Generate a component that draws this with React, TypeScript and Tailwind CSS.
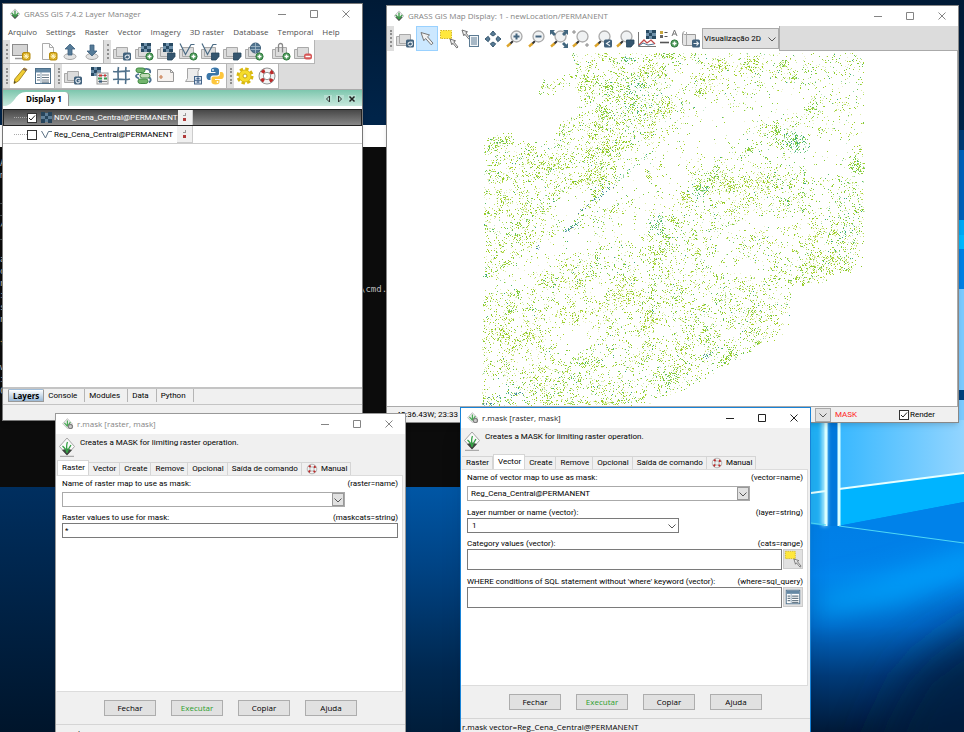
import { useMemo, type ReactNode } from "react";
import clsx from "clsx";

const UI = "font-[Roboto,'Noto_Sans',sans-serif]";
const TITLE = "font-['Open_Sans','Noto_Sans',sans-serif]";
const BOLD = "font-['Open_Sans','Noto_Sans',sans-serif] font-bold";

/* ---------- icons ---------- */

function Svg({ children, size = 20 }: { children: ReactNode; size?: number }) {
  return (
    <svg width={size} height={size} viewBox="0 0 20 20" fill="none" className="shrink-0" aria-hidden="true">
      {children}
    </svg>
  );
}

const Sheets = () => (
  <g fill="#dcdcdc" stroke="#a9a9a9">
    <path d="M1.500 7.500h11v9h-11z" />
    <path d="M4.500 5.500h11v9h-11z" />
  </g>
);

const Plus = () => (
  <g>
    <circle cx="15.500" cy="14.500" r="3.600" fill="#4f9a5c" stroke="#2f7a3d" />
    <path d="M15.500 12.500v4M13.500 14.500h4" stroke="#fff" strokeWidth="1.400" />
  </g>
);

const Badge = ({ d = "M13 15.500a2.200 2.200 0 0 1 4-1.500v-1.500M17.500 14.500a2.200 2.200 0 0 1-4 1.500" }: { d?: string }) => (
  <g>
    <rect x="11" y="10.500" width="8" height="8" rx="1.500" fill="#41617c" />
    <path d={d} stroke="#e8eef3" strokeWidth="1.100" />
  </g>
);

const Fold = () => <path d="M11.500 11h7.500v3.500l-3 3.500h-4.500z" fill="#35566f" stroke="#24445c" strokeWidth=".8" />;

const Checker = ({ x = 6, y = 1 }: { x?: number; y?: number }) => (
  <g transform={`translate(${x} ${y})`}>
    <rect width="10" height="9" fill="#6f91ab" />
    <path d="M0 0h3v3H0zM6 0h4v3H6zM3 3h3v3H3zM0 6h3v3H0zM6 6h4v3H6z" fill="#284a63" />
  </g>
);

const Vee = () => <path d="M2 1.500l5.500 11 5.500-10h3.500" stroke="#4b6b84" strokeWidth="1.200" />;

const Star = () => (
  <g>
    <rect x="11.500" y="10.500" width="7.500" height="7.500" rx="1.500" fill="#d9ac1c" stroke="#b48a0c" />
    <path d="M15.200 11.500v5.500M12.500 14.200H18M13.300 12.300l3.900 3.900M17.200 12.300l-3.900 3.900" stroke="#fff6c8" />
  </g>
);

const Lens = ({ children }: { children?: ReactNode }) => (
  <g>
    <path d="M8 12l-3.500 3.500" stroke="#333" strokeWidth="2" />
    <path d="M5.500 14.500l-3.500 3" stroke="#dda52c" strokeWidth="2.400" />
    <circle cx="11.500" cy="7.500" r="5.500" fill="#f0f2f3" stroke="#aaa" strokeWidth="1.300" />
    {children}
  </g>
);

const Arrow = () => <path d="M4 3.500l8.500 2.500-2 1.800 5.500 6.400-1.800 1.600-5.600-6.300-1.800 2.200z" fill="#f2f2f2" stroke="#777" />;

const SmallArrow = ({ x, y }: { x: number; y: number }) => (
  <path transform={`translate(${x} ${y})`} d="M0 0l5.500 1.800-1.700 1L8 8 6.800 9 2.800 4.200l-1 1.600z" fill="#eee" stroke="#666" strokeWidth=".9" />
);

const Table = () => (
  <g>
    <rect x="2.500" y="2.500" width="15" height="15" fill="#fff" stroke="#4d6f8a" />
    <path d="M3 3h14v3.500H3z" fill="#6488a4" />
    <path d="M4 9h3M4 11.500h3M4 14h3M9 9h7M9 11.500h7M9 14h7M9 16.200h7" stroke="#6a7b88" strokeWidth="1.200" />
    <path d="M8 6v11.500" stroke="#8fa7b8" />
  </g>
);

const Lifebuoy = () => (
  <g>
    <circle cx="10" cy="10" r="5.800" stroke="#f4f4f4" strokeWidth="4" />
    <circle cx="10" cy="10" r="5.800" stroke="#bd2a2a" strokeWidth="3.600" strokeDasharray="3.200 5.910" strokeDashoffset="-2.900" />
    <circle cx="10" cy="10" r="8" stroke="#777" strokeWidth=".8" />
    <circle cx="10" cy="10" r="3.700" stroke="#777" strokeWidth=".8" />
  </g>
);

const Select = () => (
  <g>
    <rect x="1.500" y="1.500" width="11" height="8" fill="#ffe83c" stroke="#d5b920" strokeDasharray="1.500 1" />
    <SmallArrow x={11} y={10} />
  </g>
);

const Logo = ({ size }: { size?: number }) => (
  <Svg size={size}>
    <path d="M10 1l7.500 8.500L10 18l-7.500-8.500z" fill="#fafafa" stroke="#a5a5a5" />
    <path d="M5 13l5-1.500 5 1.500-5 5.500z" fill="#3f443f" />
    <path d="M10 16c-.5-4-1-8 .5-11M10 16c-.5-3-2-5-4.500-7M10 16c.5-3 2-5 4-8" stroke="#35a045" strokeWidth="1.300" />
    <path d="M3 19.300h14" stroke="#999" />
  </Svg>
);

const TitleLogo = () => (
  <Svg size={12}>
    <path d="M10 1.500l8 8.500-8 8-8-8z" fill="#eee" stroke="#aaa" />
    <path d="M4 12l6-1 6 1-6 6.500z" fill="#4d554f" />
    <path d="M10 15V4M10 15L4.500 8M10 15l5.500-7" stroke="#3d9c4a" strokeWidth="2.200" />
  </Svg>
);

const DialogTitleLogo = () => (
  <Svg size={12}>
    <path d="M9 1l8 8.500-8 8-8-8z" fill="#eee" stroke="#aaa" />
    <path d="M9 14V4M9 14L4 8M9 14l5-7" stroke="#4cab58" strokeWidth="2" />
    <circle cx="14" cy="14" r="3.500" fill="#ccc" stroke="#808080" strokeWidth="2" />
  </Svg>
);

const icons = {
  newDisplay: (
    <Svg>
      <rect x="1.500" y="2.500" width="15" height="11" fill="#d5d5d5" stroke="#8c8c8c" />
      <path d="M4 16.500h9" stroke="#999" strokeWidth="1.500" />
      <Star />
    </Svg>
  ),
  newFile: (
    <Svg>
      <path d="M4.500 1.500h7l4 4v12h-11z" fill="#fcfcfc" stroke="#aaa" />
      <path d="M11.500 1.500v4h4" stroke="#aaa" />
      <Star />
    </Svg>
  ),
  open: (
    <Svg>
      <ellipse cx="10" cy="14.500" rx="6" ry="3" fill="#e2e2e2" stroke="#a5a5a5" />
      <path d="M10 2l5 5h-3v6H8V7H5z" fill="#557b98" stroke="#3d617d" strokeWidth=".8" />
    </Svg>
  ),
  save: (
    <Svg>
      <ellipse cx="10" cy="14.500" rx="6" ry="3" fill="#e2e2e2" stroke="#a5a5a5" />
      <path d="M10 14l5-5h-3V3H8v6H5z" fill="#557b98" stroke="#3d617d" strokeWidth=".8" />
    </Svg>
  ),
  render: <Svg><Sheets /><Badge /></Svg>,
  addRaster: <Svg><Sheets /><Checker x={7} y={1} /><Plus /></Svg>,
  rasterMisc: <Svg><Sheets /><Checker x={7} y={1} /><Fold /></Svg>,
  addVector: <Svg><Sheets /><Vee /><Plus /></Svg>,
  vectorMisc: <Svg><Sheets /><Vee /><Fold /></Svg>,
  overlay: <Svg><Sheets /><Fold /></Svg>,
  web: (
    <Svg>
      <Sheets />
      <circle cx="11.500" cy="6" r="5" fill="#51748f" stroke="#3b5d78" />
      <path d="M7 4.500h9M6.500 7.500h10M11.500 1v10" stroke="#a7bccb" strokeWidth=".8" />
      <Plus />
    </Svg>
  ),
  group: (
    <Svg>
      <Sheets />
      <path d="M7.500 10V3.500a2 2 0 0 1 4 0v7" stroke="#888" strokeWidth="1.300" />
      <Plus />
    </Svg>
  ),
  remove: (
    <Svg>
      <Sheets />
      <rect x="11" y="11.500" width="8" height="6" rx="2.500" fill="#d65757" />
      <path d="M12.500 14.500h5" stroke="#fff" strokeWidth="1.500" />
    </Svg>
  ),
  edit: (
    <Svg>
      <path d="M13 2l3 1.500L7.500 15l-4.500 2.500.8-4.500z" fill="#f0cd33" stroke="#a98b22" />
      <path d="M13 2l3 1.500-1.300 1.800-3-1.600z" fill="#8b6b5b" />
      <path d="M3 17.500l.5-2.500 1.500 1z" fill="#333" />
    </Svg>
  ),
  table: <Svg><Table /></Svg>,
  importLayer: <Svg><Sheets /><Badge d="M16.800 13a2.300 2.300 0 1 0 .3 2.800v-1h-2" /></Svg>,
  calculator: (
    <Svg>
      <Checker x={1} y={1} />
      <rect x="7" y="7" width="11" height="11" fill="#f1f1f1" stroke="#999" />
      <path d="M8 9.500h9M8 15.500h9" stroke="#888" />
      <path d="M9 9.500h3M14 9.500h2" stroke="#c33" strokeWidth="2.200" />
      <path d="M8 12.500h4M14 12.500h3" stroke="#3a9a50" strokeWidth="2.200" />
      <path d="M9 15.500h3" stroke="#35597a" strokeWidth="2.200" />
    </Svg>
  ),
  georect: (
    <Svg>
      <path d="M6.500 1c-1.500 6 .5 11-.5 17M14 1c-1 6 .5 11-.5 17M1 5.500c6 1 11-1 17-.5M1 13.500c6-1 11 1 17-.5" stroke="#50718b" strokeWidth="1.600" />
    </Svg>
  ),
  modeler: (
    <Svg>
      <path d="M9 3.500c5-1.500 8 0 7 3.500M5 8c-4 1-4 3 0 4.500M12 11c5 0 6 3 3 5.500" stroke="#4d7290" strokeWidth="1.800" />
      <rect x="2" y="2" width="9" height="4.500" rx="2.200" fill="#72b46c" stroke="#3f8a42" />
      <rect x="6" y="7.500" width="10" height="4.500" rx="2.200" fill="#c4dcb9" stroke="#3f8a42" />
      <rect x="4" y="13" width="10" height="4.500" rx="2.200" fill="#72b46c" stroke="#3f8a42" />
    </Svg>
  ),
  layout: (
    <Svg>
      <path d="M1.500 3.500h13l3 3v9h-16z" fill="#f5f1ee" stroke="#999" />
      <path d="M14.500 3.500v3h3" stroke="#999" />
      <path d="M5 9v4M3 11h4" stroke="#cb8054" strokeWidth="1.200" />
    </Svg>
  ),
  script: (
    <Svg>
      <path d="M4.500 2.500h12l-1.500 3v10H2.500l2-3z" fill="#ececec" stroke="#a5a5a5" />
      <rect x="11.500" y="10.500" width="7" height="7.500" fill="#d8e2ee" stroke="#44658a" />
      <path d="M15 11v6M12 14.300h6M13.500 12.500h3M13.500 16h3" stroke="#44658a" />
    </Svg>
  ),
  python: (
    <Svg>
      <path d="M10 1.500c-3 0-4 1-4 2.500v2h4.500v1H4C2.500 7 1.500 8.500 1.500 10.500S2.500 14 4 14h1.500v-2c0-1.500 1-2.500 2.500-2.500h4c1.200 0 2-.8 2-2V4c0-1.500-1.500-2.500-4-2.500z" fill="#3a76a8" />
      <path d="M10.500 18.500c3 0 4-1 4-2.500v-2H10v-1h6.500c1.500 0 2.300-1.500 2.300-3.500S18 6 16.500 6H15v2c0 1.500-1 2.500-2.500 2.500h-4c-1.200 0-2 .8-2 2V16c0 1.500 1.500 2.500 4 2.500z" fill="#fdc63c" />
      <circle cx="8" cy="4" r=".9" fill="#fff" />
      <circle cx="12.500" cy="16" r=".9" fill="#fff" />
    </Svg>
  ),
  settings: (
    <Svg>
      <circle cx="10" cy="10" r="7" stroke="#d9b90e" strokeWidth="3" strokeDasharray="3.300 2.200" />
      <circle cx="10" cy="10" r="6" fill="#f6dc2b" stroke="#dcbd17" />
      <circle cx="10" cy="10" r="2" fill="#fff" stroke="#c5a510" />
    </Svg>
  ),
  help: <Svg><Lifebuoy /></Svg>,
  pointer: <Svg><Arrow /></Svg>,
  select: <Svg><Select /></Svg>,
  query: (
    <Svg>
      <SmallArrow x={1} y={1} />
      <rect x="8.500" y="6.500" width="9" height="11" fill="#f3f6f8" stroke="#5c7b93" />
      <path d="M10 9h6M10 11h6M10 13h6M10 15h6" stroke="#5c7b93" strokeWidth="1.200" />
    </Svg>
  ),
  pan: (
    <Svg>
      <path d="M10 2l2.700 3.200L10 7 7.300 5.200zM10 18l2.700-3.200L10 13l-2.700 1.800zM2 10l3.200-2.700L7 10l-1.800 2.700zM18 10l-3.200-2.700L13 10l1.800 2.700z" fill="#587b96" stroke="#38586f" />
    </Svg>
  ),
  zoomIn: <Svg><Lens><path d="M11.500 4.500v6M8.500 7.500h6" stroke="#44657f" strokeWidth="2" /></Lens></Svg>,
  zoomOut: <Svg><Lens><path d="M8.500 7.500h6" stroke="#44657f" strokeWidth="2" /></Lens></Svg>,
  zoomExtent: (
    <Svg>
      <Lens />
      <path d="M1 1h5L4.500 2.500 7 5 5 7 2.500 4.500 1 6zM19 1v5l-1.500-1.500L15 7l-2-2 2.500-2.500L14 1zM19 19h-5l1.500-1.500L13 15l2-2 2.500 2.500L19 14z" fill="#43677f" />
    </Svg>
  ),
  zoomRegion: (
    <Svg>
      <Lens />
      <path d="M1 3h4M3 1v4M14 16h4M16 14v4" stroke="#888" />
    </Svg>
  ),
  zoomBack: <Svg><Lens /><Badge d="M17 12.200l-3.500 2.300 3.500 2.300" /></Svg>,
  zoomMore: <Svg><Lens /><Fold /></Svg>,
  analyze: (
    <Svg>
      <Checker x={9} y={1} />
      <path d="M1.500 3v14.500H19" stroke="#777" />
      <path d="M2 16l5-5 3 3 4-3 4 4" stroke="#c24949" strokeWidth="1.300" />
      <path d="M2 17l4-3 5 2 6-1" stroke="#4d7290" />
    </Svg>
  ),
  decorate: (
    <Svg>
      <path d="M1 2h3v3H1z" fill="#c9a83e" />
      <path d="M1 6h3v3H1z" fill="#666" />
      <path d="M5.500 3.500h3M5.500 7.500h3" stroke="#555" />
      <path d="M13 7l2.500-6L18 7M14 5h3" stroke="#777" />
      <path d="M1 13.500h9" stroke="#555" strokeWidth="1.600" />
      <Plus />
    </Svg>
  ),
  saveImage: (
    <Svg>
      <path d="M3.500 2.500c-2 0-2 3 0 3h11v11h-11c-1.500 0-2-1-2-2v-10" fill="#e5e5e5" stroke="#999" />
      <path d="M5.500 3v13" stroke="#aaa" />
      <Badge d="M12.500 14.500h5M15.500 12.500l2 2-2 2" />
    </Svg>
  ),
};

type IconName = keyof typeof icons;

/* ---------- shared widgets ---------- */

const Grip = () => (
  <div className="flex w-[7px] shrink-0 justify-center bg-[#dedede] py-1">
    <div className="w-0 border-l-2 border-dotted border-[#8f8f8f]" />
  </div>
);

function Tool({ name, active }: { name: IconName; active?: boolean }) {
  return (
    <button
      aria-label={name}
      className={clsx(
        "flex w-[22px] shrink-0 items-center justify-center",
        active && "border border-[#99d1ff] bg-[#cce8ff]"
      )}
    >
      {icons[name]}
    </button>
  );
}

function ToolGroup({ items }: { items: (IconName | "|")[] }) {
  return (
    <div className="flex border-r border-b border-[#b5b5b5] bg-white">
      <Grip />
      {items.map((it, i) =>
        it === "|" ? <span key={i} className="w-[5px] shrink-0" /> : <Tool key={i} name={it} />
      )}
    </div>
  );
}

function TitleBar({ icon, title, active }: { icon: ReactNode; title: string; active?: boolean }) {
  return (
    <header
      className={clsx("flex h-5 shrink-0 items-center bg-white pl-[6px]", active ? "text-[#222]" : "text-[#848484]")}
    >
      {icon}
      <h1 className={clsx("ml-[3px] text-[8px] leading-none whitespace-nowrap", TITLE)}>{title}</h1>
      <div className="ml-auto flex">
        <button aria-label="Minimize" className="flex h-5 w-8 items-center justify-center">
          <svg width="8" height="8" viewBox="0 0 8 8" stroke="currentColor"><path d="M0 4.500h8" /></svg>
        </button>
        <button aria-label="Maximize" className="flex h-5 w-8 items-center justify-center">
          <svg width="8" height="8" viewBox="0 0 8 8" stroke="currentColor" fill="none"><path d="M.5.5h7v7h-7z" /></svg>
        </button>
        <button aria-label="Close" className="flex h-5 w-8 items-center justify-center">
          <svg width="8" height="8" viewBox="0 0 8 8" stroke="currentColor"><path d="M.5.5l7 7M7.500.5l-7 7" /></svg>
        </button>
      </div>
    </header>
  );
}

const Chevron = () => (
  <svg width="8" height="8" viewBox="0 0 8 8" fill="none" stroke="#555" className="pointer-events-none" aria-hidden="true">
    <path d="M.5 2.500L4 6l3.500-3.500" />
  </svg>
);

function Check({ checked, label }: { checked?: boolean; label: ReactNode }) {
  return (
    <label className="flex items-center">
      <span className="grid size-[10px] shrink-0 place-items-center">
        <input
          type="checkbox"
          defaultChecked={checked}
          className="peer col-start-1 row-start-1 size-[10px] appearance-none border border-[#333] bg-white"
        />
        <svg width="8" height="8" viewBox="0 0 8 8" fill="none" stroke="#222" className="pointer-events-none invisible z-10 col-start-1 row-start-1 peer-checked:visible">
          <path d="M1 4l2 2 4-4.500" />
        </svg>
      </span>
      {label}
    </label>
  );
}

/* ---------- layer manager ---------- */

const MENUS = ["Arquivo", "Settings", "Raster", "Vector", "Imagery", "3D raster", "Database", "Temporal", "Help"];

function LayerRow({ name, selected, icon }: { name: string; selected?: boolean; icon: ReactNode }) {
  return (
    <li
      className={clsx(
        "flex h-[17px] items-center",
        selected ? "bg-gradient-to-b from-[#444] to-[#8d8d8d] text-white outline outline-1 -outline-offset-1 outline-[#222]" : "text-black"
      )}
    >
      <span className="ml-[11px] w-[13px] shrink-0 border-t border-dotted border-[#aaa]" />
      <Check
        checked={selected}
        label={
          <>
            <span className="ml-[4px] flex w-[13px] shrink-0">{icon}</span>
            <span className="text-[8px] leading-none whitespace-nowrap">{name}</span>
          </>
        }
      />
      <button
        aria-label={`Options ${name}`}
        className="ml-auto flex h-full w-4 flex-col items-center justify-center gap-[2px] border-r border-b border-[#ccc] bg-[#f0f0f0]"
      >
        <span className="h-[3px] w-[3px] border-r border-b border-[#999]" />
        <span className="size-[3px] bg-[#b03a3a]" />
      </button>
      <span className="w-[169px] shrink-0" />
    </li>
  );
}

function LayerManager() {
  return (
    <section className="absolute top-[3px] left-[2px] flex h-[418px] w-[361px] flex-col border border-[#777] bg-[#f0f0f0] shadow-md">
      <TitleBar icon={<TitleLogo />} title="GRASS GIS 7.4.2 Layer Manager" />
      <nav className={clsx("flex h-4 shrink-0 items-center gap-[9px] bg-white pl-[5px]", TITLE)}>
        {MENUS.map((m) => (
          <button key={m} className="text-[8px] leading-none whitespace-nowrap text-[#505050]">
            {m}
          </button>
        ))}
      </nav>
      <div className="flex h-6 shrink-0 bg-[#dcdcdc]">
        <ToolGroup items={["newDisplay", "|", "newFile", "open", "save"]} />
        <ToolGroup items={["render", "addRaster", "rasterMisc", "addVector", "vectorMisc", "overlay", "web", "|", "group", "remove"]} />
      </div>
      <div className="flex h-[25px] shrink-0 bg-[#dcdcdc]">
        <ToolGroup items={["edit", "table"]} />
        <ToolGroup items={["importLayer", "|", "calculator", "georect", "modeler", "layout", "|", "script", "python"]} />
        <ToolGroup items={["settings", "help"]} />
      </div>

      <div className="flex h-[17px] shrink-0 items-end border-t border-[#aaa] bg-gradient-to-b from-[#7cc6ad] to-[#c9e9de]">
        <svg width="23" height="14" viewBox="0 0 23 14" aria-hidden="true">
          <path d="M2 14C12 13 12 0 23 0v14z" fill="#fff" />
        </svg>
        <span className={clsx("flex h-[14px] items-center rounded-tr-sm border-r border-[#999] bg-white pr-1.5 text-[8px] text-black", BOLD)}>
          Display 1
        </span>
        <span className="ml-auto flex gap-1 pr-1.5 pb-[3px]">
          <button aria-label="Previous" className="bg-[#b5dfd1]">
            <svg width="8" height="8" viewBox="0 0 8 8" fill="none" stroke="#333"><path d="M5.500 1v6L2.500 4z" /></svg>
          </button>
          <button aria-label="Next" className="bg-[#b5dfd1]">
            <svg width="8" height="8" viewBox="0 0 8 8" fill="none" stroke="#333"><path d="M2.500 1v6l3-3z" /></svg>
          </button>
          <button aria-label="Close tab" className="bg-[#b5dfd1]">
            <svg width="8" height="8" viewBox="0 0 8 8" stroke="#222" strokeWidth="1.500"><path d="M1.500 1.500l5 5M6.500 1.500l-5 5" /></svg>
          </button>
        </span>
      </div>

      <ul className="flex-1 bg-white pt-[3px]">
        <LayerRow
          name="NDVI_Cena_Central@PERMANENT"
          selected
          icon={
            <svg width="11" height="11" viewBox="0 0 11 11">
              <path d="M0 0h4v4H0zM7 0h4v4H7zM4 4h3v3H4zM0 7h4v4H0zM7 7h4v4H7z" fill="#27455c" />
              <path d="M4 1h3v3H4zM0 4h4v3H0zM7 4h4v3H7zM4 7h3v3H4z" fill="#5f7f98" />
            </svg>
          }
        />
        <LayerRow
          name="Reg_Cena_Central@PERMANENT"
          icon={
            <svg width="11" height="9" viewBox="0 0 11 9" fill="none" stroke="#5b7184">
              <path d="M.5 1l4 7 3-6.500H11" />
            </svg>
          }
        />
        <li className="border-t border-[#ccc]" />
      </ul>

      <div className="flex h-[18px] shrink-0 items-stretch border-t-2 border-b border-[#c4c4c4] pb-[2px] pl-[5px] text-[8px] text-black">
        <button className={clsx("border border-[#999] border-t-transparent bg-gradient-to-b from-white to-[#9bb9d6] px-1 leading-none", BOLD)}>
          Layers
        </button>
        {["Console", "Modules", "Data", "Python"].map((t) => (
          <button key={t} className="border-r border-[#b5b5b5] pr-[7px] pl-1 leading-none">
            {t}
          </button>
        ))}
      </div>
      <div className="h-[15px] shrink-0" />
    </section>
  );
}

/* ---------- map display ---------- */

// outline of the region with data, in map canvas pixels
const REGION: [number, number][] = [
  [91, 2], [384, 2], [384, 216], [354, 227], [330, 237], [311, 234], [309, 267], [284, 290], [260, 310], [233, 323],
  [210, 337], [187, 345], [140, 354], [2, 355], [3, 256], [5, 226], [4, 106], [7, 87], [33, 83], [46, 92], [72, 90],
  [80, 72], [96, 60], [95, 32], [68, 47], [60, 43], [61, 36], [83, 25], [97, 22],
];

// x, y, radius x, radius y, rotation in degrees, dots, colour index
const CLUSTERS: number[][] = [
  [316, 92, 12, 8, 20, 150, 2], [296, 80, 4, 10, 0, 60, 1], [378, 116, 7, 6, 0, 80, 1], [248, 134, 7, 4, 30, 60, 0],
  [204, 148, 6, 5, 0, 50, 0], [178, 174, 7, 8, 0, 60, 2], [186, 187, 3, 4, -40, 24, 1], [171, 81, 3, 5, -30, 30, 0],
  [124, 62, 8, 6, 30, 50, 1], [108, 128, 14, 7, -25, 110, 0], [165, 22, 14, 6, -25, 90, 0], [240, 15, 10, 5, 0, 70, 0],
  [270, 15, 12, 7, -20, 80, 0], [304, 13, 4, 4, 0, 30, 1], [313, 26, 4, 3, 0, 24, 1], [188, 5, 7, 3, 0, 35, 1],
  [178, 62, 18, 8, -30, 140, 0], [128, 98, 22, 6, -15, 110, 0], [334, 57, 8, 8, 0, 60, 1], [285, 132, 28, 8, 0, 150, 0],
  [350, 212, 24, 11, -10, 110, 0], [270, 265, 34, 18, 20, 170, 0], [235, 126, 18, 8, -30, 80, 1], [48, 286, 7, 4, 0, 50, 0],
  [38, 243, 3, 4, 0, 24, 1], [64, 318, 6, 4, 0, 26, 0], [172, 270, 8, 10, 0, 60, 0], [190, 328, 8, 8, 0, 60, 1],
  [247, 306, 5, 7, 20, 30, 1], [227, 304, 3, 3, 0, 12, 3], [158, 60, 20, 24, 0, 60, 2], [160, 35, 18, 12, 0, 70, 2],
  [20, 91, 14, 6, -20, 70, 1], [75, 114, 10, 8, 0, 60, 0], [62, 36, 3, 7, 0, 16, 1], [268, 99, 5, 3, 0, 24, 1],
  [220, 42, 5, 4, 0, 28, 0], [148, 8, 7, 3, 0, 22, 2], [148, 120, 26, 2, -38, 34, 2], [120, 145, 24, 2, -38, 28, 3],
  [90, 178, 9, 2, -35, 26, 3], [24, 214, 12, 3, -30, 30, 1], [6, 225, 2, 2, 0, 8, 2], [58, 196, 2, 2, 0, 6, 3],
  [33, 344, 20, 2, -6, 26, 3], [8, 353, 7, 1, 0, 16, 3], [124, 352, 18, 2, 0, 60, 0], [220, 138, 7, 7, 0, 50, 2],
  [168, 125, 3, 6, -25, 22, 0], [230, 30, 16, 12, 0, 80, 0], [20, 285, 18, 16, 0, 110, 0], [80, 230, 20, 7, 0, 80, 0],
  [105, 352, 60, 3, 0, 60, 0], [140, 244, 12, 9, 0, 60, 0], [365, 180, 20, 30, 0, 90, 2], [30, 260, 6, 3, -30, 30, 1],
  [120, 75, 24, 18, -20, 160, 0], [105, 30, 10, 22, 0, 60, 0], [125, 35, 22, 12, 0, 100, 1],
];

// x, y, radius x, radius y, rotation: areas where few dots fall
const GAPS: number[][] = [
  [150, 128, 46, 9, -42], [92, 155, 26, 10, -42], [75, 200, 48, 11, -28], [30, 232, 30, 6, -10], [175, 105, 24, 10, -20],
  [235, 80, 36, 20, -20], [290, 55, 36, 12, -20], [182, 135, 22, 24, 0], [160, 168, 22, 14, -30], [90, 288, 18, 10, 0],
  [290, 172, 44, 6, -10], [340, 100, 24, 14, 0], [90, 50, 8, 8, 0], [265, 218, 24, 6, 0],
];

const PALETTES = [
  ["#a5cf25", "#c3e06c", "#dcecab", "#8fc92c", "#eaf2c8"],
  ["#84cd3a", "#b2dd5c", "#d0ebb4", "#9dd02d", "#6fc555"],
  ["#58bd6c", "#93d7a1", "#c6e8cb", "#7ccb3e", "#38a982"],
  ["#3c8ea0", "#55b38c", "#5079a4", "#9fc6c8", "#4fae6f"],
];

function inside(x: number, y: number) {
  let hit = false;
  for (let i = 0, j = REGION.length - 1; i < REGION.length; j = i++) {
    const [xi, yi] = REGION[i];
    const [xj, yj] = REGION[j];
    if (yi > y !== yj > y && x < ((xj - xi) * (y - yi)) / (yj - yi) + xi) hit = !hit;
  }
  return hit;
}

function buildDots() {
  let seed = 4217;
  const rnd = () => {
    seed = (seed * 1664525 + 1013904223) >>> 0;
    return seed / 4294967296;
  };
  const lattice = Array.from({ length: 100 * 100 }, rnd);
  const noise = (x: number, y: number) => {
    const xi = Math.floor(x);
    const yi = Math.floor(y);
    const fx = x - xi;
    const fy = y - yi;
    const at = (a: number, b: number) => lattice[b * 100 + a];
    return (
      (at(xi, yi) * (1 - fx) + at(xi + 1, yi) * fx) * (1 - fy) +
      (at(xi, yi + 1) * (1 - fx) + at(xi + 1, yi + 1) * fx) * fy
    );
  };
  const paths: Record<string, string> = {};
  const put = (x: number, y: number, palette: number) => {
    const px = Math.floor(x);
    const py = Math.floor(y);
    if (px < 1 || py < 2 || px > 384 || py > 355) return;
    const color = PALETTES[palette][Math.floor(rnd() * 5)];
    paths[color] = (paths[color] ?? "") + `M${px} ${py}h1v1h-1z`;
  };

  for (let i = 0; i < 72000; i++) {
    const x = rnd() * 385;
    const y = rnd() * 355;
    if (!inside(x, y)) continue;
    let density = Math.pow(noise(x / 14, y / 14) * 0.3 + noise(x / 4 + 1, y / 4 + 1) * 0.7, 2.3) * 1.1;
    if (x < 150 && y > 60 && y < 190) density *= 1.2;
    if (x > 190 && y < 125) density *= 0.6;
    for (const [cx, cy, rx, ry, rot] of GAPS) {
      const a = (-rot * Math.PI) / 180;
      const dx = x - cx;
      const dy = y - cy;
      const u = (dx * Math.cos(a) - dy * Math.sin(a)) / rx;
      const v = (dx * Math.sin(a) + dy * Math.cos(a)) / ry;
      const q = u * u + v * v;
      if (q < 1.8) {
        density *= q < 1 ? 0.15 : 0.5;
        break;
      }
    }
    if (rnd() > density) continue;
    const green = noise(x / 30 + 40, y / 30 + 40) + (x > 300 ? 0.15 : 0);
    put(x, y, rnd() < green * 0.7 ? (rnd() < 0.25 ? 2 : 1) : 0);
  }

  for (const [cx, cy, rx, ry, rot, n, palette] of CLUSTERS) {
    const a = (rot * Math.PI) / 180;
    for (let i = 0; i < n; i++) {
      const t = rnd() * Math.PI * 2;
      const r = Math.pow(rnd(), 0.8) * 1.25;
      const u = Math.cos(t) * r * rx;
      const v = Math.sin(t) * r * ry;
      put(cx + u * Math.cos(a) - v * Math.sin(a), cy + u * Math.sin(a) + v * Math.cos(a), palette);
    }
  }
  return Object.entries(paths);
}

function NdviMap() {
  const dots = useMemo(buildDots, []);
  return (
    <svg width="390" height="355" viewBox="0 0 390 355" shapeRendering="crispEdges" className="ml-[93px]" role="img" aria-label="NDVI">
      {dots.map(([color, d]) => (
        <path key={color} d={d} fill={color} />
      ))}
    </svg>
  );
}

const MAP_TOOLS: IconName[] = [
  "render", "pointer", "select", "query", "pan", "zoomIn", "zoomOut", "zoomExtent", "zoomRegion", "zoomBack", "zoomMore",
  "analyze", "decorate", "saveImage",
];

function MapDisplay() {
  return (
    <section className="absolute top-[5px] right-[5px] left-[386px] flex h-[418px] flex-col border border-[#888] bg-white shadow-md">
      <TitleBar icon={<TitleLogo />} title="GRASS GIS Map Display: 1 - newLocation/PERMANENT" />
      <div className="flex h-[25px] shrink-0 bg-white">
        <Grip />
        {MAP_TOOLS.map((t) => (
          <Tool key={t} name={t} active={t === "pointer"} />
        ))}
        <div className="my-[2px] grid w-[77px] shrink-0 items-center border border-[#aaa] bg-[#e1e1e1] text-black">
          <select aria-label="Display mode" className="col-start-1 row-start-1 w-full appearance-none bg-transparent pl-px text-[8px]">
            <option>Visualização 2D</option>
          </select>
          <span className="pointer-events-none col-start-1 row-start-1 mr-[2px] justify-self-end"><Chevron /></span>
        </div>
        <div className="flex-1 border-b border-l border-[#aaa] bg-[#dcdcdc]" />
      </div>
      <div className="min-h-0 flex-1 overflow-hidden border-r border-[#aaa]">
        <NdviMap />
      </div>
      <footer className="flex h-4 shrink-0 items-center border-t border-[#aaa] bg-[#f0f0f0] text-[8px] leading-none text-black">
        <span className="pl-[7px] whitespace-nowrap">-45:36.43W; 23:33</span>
        <span className="ml-auto flex h-[14px] w-4 items-center justify-center border border-[#aaa] bg-[#e1e1e1]"><Chevron /></span>
        <span className="ml-1 w-[64px] text-[#f22]">MASK</span>
        <span className="w-[59px]">
          <Check checked label={<span className="ml-px">Render</span>} />
        </span>
      </footer>
    </section>
  );
}

/* ---------- r.mask dialogs ---------- */

const TABS = ["Raster", "Vector", "Create", "Remove", "Opcional", "Saída de comando", "Manual"];

function MaskDialog({ tab, active, status, className, children }: {
  tab: string;
  active?: boolean;
  status: string;
  className: string;
  children: ReactNode;
}) {
  return (
    <section className={clsx("absolute flex h-[326px] w-[351px] flex-col border bg-[#f0f0f0] text-[8px] text-black", className)}>
      <TitleBar icon={<DialogTitleLogo />} title="r.mask [raster, mask]" active={active} />
      <div className="flex h-[26px] shrink-0 pl-px">
        <span className="pt-[3px]"><Logo size={20} /></span>
        <p className="ml-[3px] pt-1 leading-[10px] whitespace-nowrap">Creates a MASK for limiting raster operation.</p>
      </div>
      <div role="tablist" className="flex h-[15px] shrink-0 items-end px-px">
        {TABS.map((t) => (
          <button
            key={t}
            role="tab"
            aria-selected={t === tab}
            className={clsx(
              "flex items-center gap-[3px] border-t border-r border-[#d5d5d5] pr-[3px] pl-1 leading-none whitespace-nowrap",
              t === tab ? "h-[15px] border-l bg-white" : "h-[13px]"
            )}
          >
            {t === "Manual" && <Svg size={12}><Lifebuoy /></Svg>}
            {t}
          </button>
        ))}
      </div>
      <div className="mr-[2px] min-h-0 flex-1 border border-[#dcdcdc] border-l-transparent bg-white pr-1 pl-[5px]">{children}</div>
      <div className="flex h-8 shrink-0 items-center justify-center gap-[15px]">
        {["Fechar", "Executar", "Copiar", "Ajuda"].map((b) => (
          <button
            key={b}
            className={clsx(
              "h-4 w-[52px] border border-[#adadad] bg-[#e1e1e1] text-[8px] leading-none",
              TITLE,
              b === "Executar" && "text-[#2e9e2e]"
            )}
          >
            {b}
          </button>
        ))}
      </div>
      <footer className={clsx("flex h-[14px] shrink-0 items-center border-t border-[#d5d5d5] pt-[2px] pl-px text-[8px] leading-none", TITLE)}>
        {status}
      </footer>
    </section>
  );
}

function Row({ id, label, hint, className }: { id: string; label: string; hint: string; className: string }) {
  return (
    <div className={clsx("flex items-end justify-between leading-[10px] whitespace-nowrap", className)}>
      <label htmlFor={id}>{label}</label>
      <span>{hint}</span>
    </div>
  );
}

function MapCombo({ id, value }: { id: string; value: string }) {
  return (
    <div className="mt-[3px] flex h-[15px] w-[283px] border border-[#aaa]">
      <input id={id} defaultValue={value} className="min-w-0 flex-1 bg-white pl-[3px]" />
      <button aria-label="Show maps" className="flex w-3 items-center justify-center border border-[#999] bg-[#e1e1e1]">
        <Chevron />
      </button>
    </div>
  );
}

function RasterDialog() {
  return (
    <MaskDialog tab="Raster" status="r.mask" className="top-[413px] left-[55px] border-[#999] shadow-md">
      <Row id="raster" label="Name of raster map to use as mask:" hint="(raster=name)" className="h-[13px]" />
      <MapCombo id="raster" value="" />
      <Row id="maskcats" label="Raster values to use for mask:" hint="(maskcats=string)" className="h-[16px]" />
      <input id="maskcats" defaultValue="*" className="block h-[15px] w-full border border-[#7a7a7a] pl-[2px]" />
    </MaskDialog>
  );
}

function VectorDialog() {
  return (
    <MaskDialog
      tab="Vector"
      active
      status="r.mask vector=Reg_Cena_Central@PERMANENT"
      className="top-[407px] left-[460px] border-[#1883d7] shadow-xl"
    >
      <Row id="vector" label="Name of vector map to use as mask:" hint="(vector=name)" className="h-[13px]" />
      <MapCombo id="vector" value="Reg_Cena_Central@PERMANENT" />
      <Row id="layer" label="Layer number or name (vector):" hint="(layer=string)" className="h-[17px]" />
      <div className="grid h-[15px] w-[212px] items-center border border-[#7a7a7a]">
        <select id="layer" className="col-start-1 row-start-1 w-full appearance-none bg-transparent pl-1">
          <option>1</option>
        </select>
        <span className="pointer-events-none col-start-1 row-start-1 mr-[2px] justify-self-end"><Chevron /></span>
      </div>
      <Row id="cats" label="Category values (vector):" hint="(cats=range)" className="h-[16px]" />
      <div className="flex">
        <input id="cats" className="h-[21px] min-w-0 flex-1 border border-[#7a7a7a]" />
        <button aria-label="Select features" className="ml-px flex h-[20px] w-[20px] items-center justify-center border border-[#ccc] bg-[#e1e1e1]">
          <Svg size={18}><Select /></Svg>
        </button>
      </div>
      <Row id="where" label="WHERE conditions of SQL statement without 'where' keyword (vector):" hint="(where=sql_query)" className="h-[17px]" />
      <div className="flex">
        <input id="where" className="h-[21px] min-w-0 flex-1 border border-[#7a7a7a]" />
        <button aria-label="SQL builder" className="ml-px flex h-[20px] w-[20px] items-center justify-center border border-[#ccc] bg-[#e1e1e1]">
          <Svg size={18}><Table /></Svg>
        </button>
      </div>
    </MaskDialog>
  );
}

/* ---------- desktop ---------- */

function Wallpaper() {
  return (
    <svg viewBox="0 0 964 732" preserveAspectRatio="none" className="absolute inset-0 h-full w-full" aria-hidden="true">
      <defs>
        <linearGradient id="night" x1="0" y1="0" x2="0" y2="1">
          <stop offset="0" stopColor="#001a36" />
          <stop offset=".16" stopColor="#002449" />
          <stop offset=".66" stopColor="#002f60" />
          <stop offset="1" stopColor="#00152b" />
        </linearGradient>
        <linearGradient id="mid" x1="0" y1="0" x2="0" y2="1">
          <stop offset="0" stopColor="#0058a8" />
          <stop offset=".35" stopColor="#004384" />
          <stop offset=".75" stopColor="#002850" />
          <stop offset="1" stopColor="#001d3a" />
        </linearGradient>
        <linearGradient id="beam" x1="0" y1="0" x2="0" y2="1">
          <stop offset="0" stopColor="#0078e0" />
          <stop offset=".5" stopColor="#0082ea" />
          <stop offset=".66" stopColor="#0068c6" />
          <stop offset=".82" stopColor="#003a78" />
          <stop offset="1" stopColor="#001a38" />
        </linearGradient>
        <linearGradient id="pane" x1="0" y1="0" x2="1" y2="0">
          <stop offset="0" stopColor="#38b8ff" />
          <stop offset="1" stopColor="#93d5ff" />
        </linearGradient>
        <filter id="soft" x="-50%" y="-50%" width="200%" height="200%"><feGaussianBlur stdDeviation="14" /></filter>
        <filter id="dusk" x="-50%" y="-50%" width="200%" height="200%"><feGaussianBlur stdDeviation="24" /></filter>
        <filter id="glow" x="-200%" width="500%"><feGaussianBlur stdDeviation="2" /></filter>
      </defs>
      <path d="M0 0h964v732H0z" fill="url(#night)" />
      <path d="M400 480h70v252h-70z" fill="url(#mid)" />
      <path d="M790 420h174v312H790z" fill="url(#beam)" />
      <path d="M820 595q80-15 164-50v20l-90 36-80 14z" fill="#00a8ff" filter="url(#soft)" />
      <path d="M1030 600q-70 30-120 75l-50 105h180z" fill="#001c3c" filter="url(#dusk)" opacity=".8" />
      <path d="M800 420h27v106l-27-3z" fill="#20b0f5" />
      <path d="M838 420h126v53l-126 17z" fill="url(#pane)" />
      <path d="M838 490l126-17v29l-126 24z" fill="#00b4ff" />
      <path d="M838 526l126-24v41z" fill="#0082ea" />
      <path d="M827 420h11v106h-11z" fill="#0078dc" />
      <path d="M822 420h5v106h-5z" fill="#b9f0ff" filter="url(#glow)" />
      <path d="M826 420v106M839 420v106" stroke="#dcffff" strokeWidth="3" />
      <path d="M811 493l15-2M839 489l125-16" stroke="#e6ffff" strokeWidth="2" />
      <path d="M811 523l15 2M839 526l125 17" stroke="#4fd8f5" />
      <path d="M958 150h6v70h-6z" fill="#0060b8" />
      <path d="M958 130h6v20h-6z" fill="#003a74" />
      <path d="M958 220h6v15h-6z" fill="#00a8f5" />
      <path d="M958 235h6v14h-6z" fill="#00b8ff" />
      <path d="M958 249h6v40h-6z" fill="#0080e4" />
      <path d="M958 289h6v101h-6z" fill="#7ccaff" />
      <path d="M958 390h6v10h-6z" fill="#00407c" />
      <path d="M958 400h6v20h-6z" fill="#7ccaff" />
    </svg>
  );
}

const CONSOLE_LINES = ["A", "m", "", "_", "_", "/", "_", "", "a", "o", "n", "i", "s", "n", ".", "t", "", "w", "i", "C"];

function ConsoleWindow() {
  return (
    <section className="absolute top-[125px] left-0 h-[362px] w-[470px] overflow-hidden bg-[#0c0c0c] font-['DejaVu_Sans_Mono',monospace] text-[9px] text-[#bbb]">
      <div className="h-[22px] bg-white" />
      <div className="flex pt-[10px]">
        <div className="w-[360px]">
          {CONSOLE_LINES.map((l, i) => (
            <div key={i} className={clsx("h-[12px] leading-[12px]", i === 14 || i === 15 ? "text-[#d08030]" : "")}>
              {l}
            </div>
          ))}
        </div>
        <span className="pt-[126px] leading-[12px]">\cmd.</span>
      </div>
    </section>
  );
}

export default function App() {
  return (
    <main className={clsx("relative min-h-screen w-full overflow-hidden bg-[#001a36]", UI)}>
      <Wallpaper />
      <ConsoleWindow />
      <LayerManager />
      <MapDisplay />
      <RasterDialog />
      <VectorDialog />
    </main>
  );
}
